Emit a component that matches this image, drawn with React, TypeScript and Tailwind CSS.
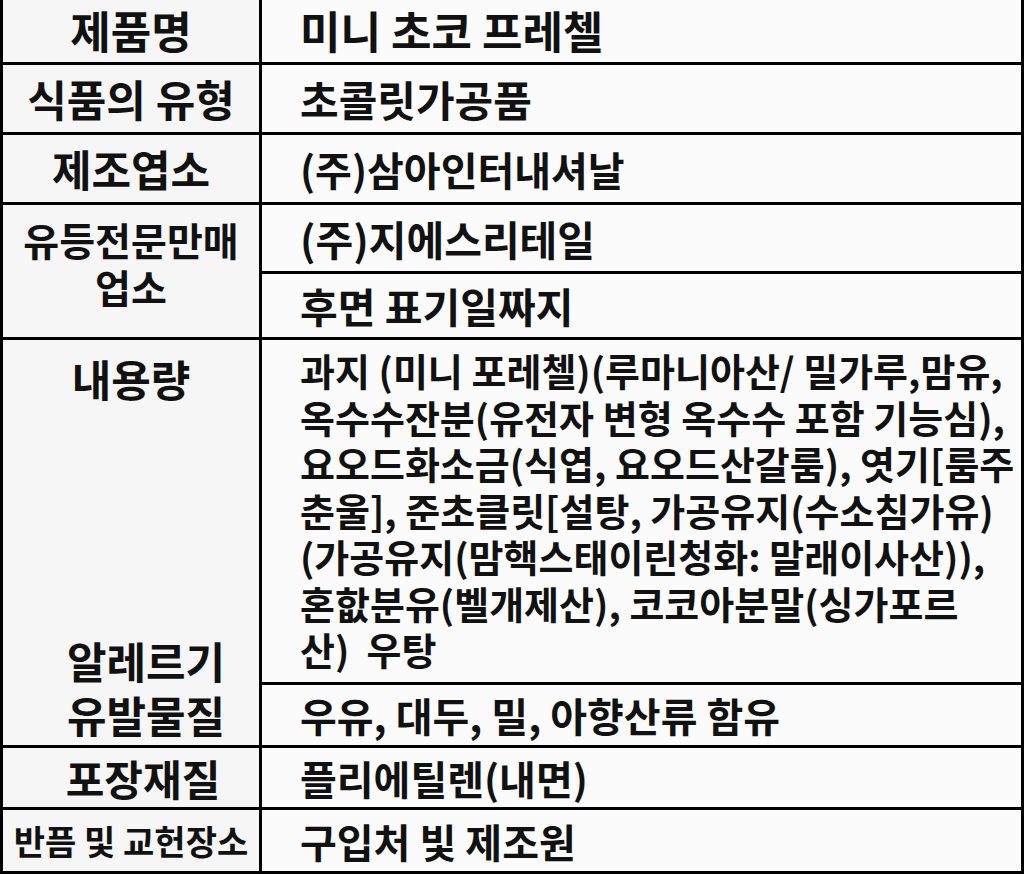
import React from "react";

const font = { fontFamily: '"Noto Sans CJK KR", "Noto Sans", sans-serif' };

function Label({ children, className }: { children: React.ReactNode; className: string }) {
  return (
    <div className={"bg-[#f6f6f6] flex items-center justify-center font-bold text-[#111] leading-none whitespace-nowrap " + className}>
      {children}
    </div>
  );
}

function Value({ children, className }: { children: React.ReactNode; className: string }) {
  return (
    <div className={"bg-[#fbfbfb] flex items-center pl-[38px] font-bold text-[#111] leading-none whitespace-nowrap " + className}>
      {children}
    </div>
  );
}

export default function App() {
  const para = [
    "과지 (미니 포레첼)(루마니아산/ 밀가루,맘유,",
    "옥수수잔분(유전자 변형 옥수수 포함 기능심),",
    "요오드화소금(식엽, 요오드산갈룸), 엿기[룸주",
    "춘울], 준초클릿[설탕, 가공유지(수소침가유)",
    "(가공유지(맘핵스태이린청화: 말래이사산)),",
    "혼핪분유(벨개제산), 코코아분말(싱가포르",
    "산)  우탕",
  ];
  return (
    <div className="w-[1024px] h-[875px] bg-white" style={font}>
      <div className="grid grid-cols-[256px_759px] grid-rows-[62px_67px_67px_66px_63px_342px_60px_59px_61px] gap-[3px] bg-black border-x-[3px] border-b-[3px] border-black">
        <Label className="row-start-1 col-start-1 text-[44px] pb-[3px]">제품명</Label>
        <Value className="row-start-1 col-start-2 text-[44px] pb-[3px]">미니 초코 프레첼</Value>

        <Label className="row-start-2 col-start-1 text-[43px]">식품의 유형</Label>
        <Value className="row-start-2 col-start-2 text-[42px]">초콜릿가공품</Value>

        <Label className="row-start-3 col-start-1 text-[43px]">제조엽소</Label>
        <Value className="row-start-3 col-start-2 text-[40px]">(주)삼아인터내셔날</Value>

        <div className="row-start-4 row-span-2 col-start-1 bg-[#f6f6f6] flex flex-col items-center pt-[11px] text-[39px] font-bold text-[#111] leading-[47px] whitespace-nowrap">
          <span>유등전문만매</span>
          <span>업소</span>
        </div>
        <Value className="row-start-4 col-start-2 text-[41px]">(주)지에스리테일</Value>
        <Value className="row-start-5 col-start-2 text-[41px]">후면 표기일짜지</Value>

        <div className="row-start-6 row-span-2 col-start-1 bg-[#f6f6f6] flex flex-col items-center justify-between pt-[11px] pb-[4px] text-[43px] font-bold text-[#111] leading-[54px] whitespace-nowrap">
          <span>내용량</span>
          <div className="flex flex-col items-center pl-[30px]">
            <span>알레르기</span>
            <span>유발물질</span>
          </div>
        </div>
        <div className="row-start-6 col-start-2 bg-[#fbfbfb] pl-[38px] pt-[7px] text-[38px] font-bold text-[#111] leading-[46.5px] whitespace-nowrap">
          {para.map((l, i) => (
            <div key={i} className="whitespace-pre">{l}</div>
          ))}
        </div>
        <Value className="row-start-7 col-start-2 text-[40px]">우유, 대두, 밀, 아향산류 함유</Value>

        <Label className="row-start-8 col-start-1 text-[42px] pl-[24px]">포장재질</Label>
        <Value className="row-start-8 col-start-2 text-[40px]">플리에틸렌(내면)</Value>

        <Label className="row-start-9 col-start-1 text-[34px]">반픔 및 교헌장소</Label>
        <Value className="row-start-9 col-start-2 text-[40px]">구입처 빛 제조원</Value>
      </div>
    </div>
  );
}
